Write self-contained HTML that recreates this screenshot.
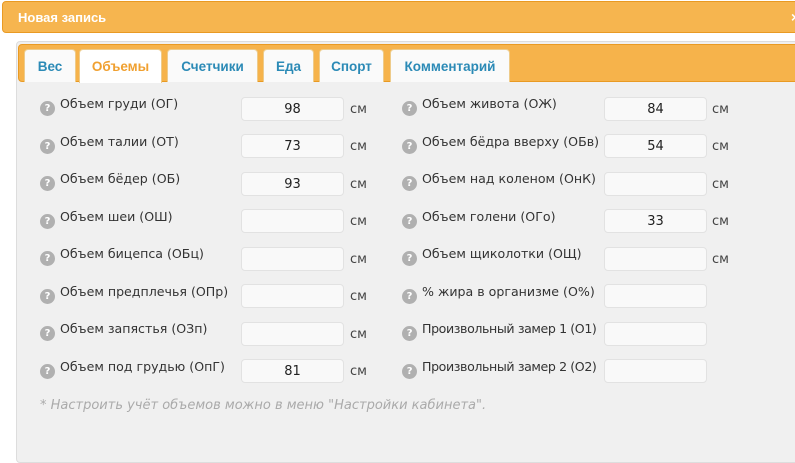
<!DOCTYPE html>
<html><head><meta charset="utf-8"><style>
body{margin:0;width:795px;height:431px;background:#fff;font-family:"Liberation Sans","DejaVu Sans",sans-serif;position:relative;overflow:hidden}
.hdr{position:absolute;left:2px;top:1px;width:800px;height:32px;background:#f6b54f;border:1px solid #e99a23;border-radius:4px;box-sizing:border-box}
.hdr span{position:absolute;left:15px;top:8px;color:#fff;font-weight:bold;font-size:13px}
.hdr b{position:absolute;left:788px;top:7px;color:#fff;font-size:14px}
.panel{position:absolute;left:16px;top:41px;width:790px;height:420px;background:#f0f0f0;border:1px solid #ddd;border-radius:4px}
.tabbar{position:absolute;left:18px;top:44px;width:790px;height:38px;background:#f6b34b;border:1px solid #e99a23;border-radius:4px;box-sizing:border-box}
.tab{position:absolute;top:49px;height:33px;background:#fafafa;border:1px solid #eecb8a;border-bottom:none;border-radius:4px 4px 0 0;box-sizing:border-box;text-align:center;font-weight:bold;font-size:13.5px;color:#2b8ab6;line-height:34px}
.tab.act{background:#fff;color:#f0a030;height:34px}
.lbl{position:absolute;font-family:"DejaVu Sans",sans-serif;font-size:12.6px;color:#333;white-space:nowrap}
.q{display:inline-block;width:15px;height:15px;border-radius:50%;background:#b0b0b0;color:#fff;font-size:10px;font-weight:bold;text-align:center;line-height:15px;margin-right:5px;vertical-align:-3px}
.inp{position:absolute;width:103px;height:24px;background:#f9f9f9;border:1px solid #e2e2e2;border-radius:4px;box-sizing:border-box;text-align:center;font-family:"DejaVu Sans",sans-serif;font-size:13px;color:#222;line-height:24px}
.cm{position:absolute;font-family:"DejaVu Sans",sans-serif;font-size:13px;color:#444}
.note{position:absolute;left:40px;top:398px;font-family:"DejaVu Sans",sans-serif;font-size:13px;font-style:italic;color:#aaa;white-space:nowrap}
</style></head><body>
<div class="hdr"><span>Новая запись</span><b>×</b></div>
<div class="panel"></div>
<div class="tabbar"></div>
<div class="tab" style="left:24px;width:52px">Вес</div>
<div class="tab act" style="left:79px;width:83px">Объемы</div>
<div class="tab" style="left:167px;width:91px">Счетчики</div>
<div class="tab" style="left:263px;width:51px">Еда</div>
<div class="tab" style="left:319px;width:65px">Спорт</div>
<div class="tab" style="left:390px;width:120px">Комментарий</div>

<div class="lbl" style="left:40px;top:96px"><span class="q">?</span>Объем груди (ОГ)</div>
<div class="inp" style="left:241px;top:97px">98</div><div class="cm" style="left:350px;top:102px">см</div>
<div class="lbl" style="left:40px;top:134px"><span class="q">?</span>Объем талии (ОТ)</div>
<div class="inp" style="left:241px;top:134px">73</div><div class="cm" style="left:350px;top:139px">см</div>
<div class="lbl" style="left:40px;top:171px"><span class="q">?</span>Объем бёдер (ОБ)</div>
<div class="inp" style="left:241px;top:172px">93</div><div class="cm" style="left:350px;top:177px">см</div>
<div class="lbl" style="left:40px;top:209px"><span class="q">?</span>Объем шеи (ОШ)</div>
<div class="inp" style="left:241px;top:209px"></div><div class="cm" style="left:350px;top:214px">см</div>
<div class="lbl" style="left:40px;top:246px"><span class="q">?</span>Объем бицепса (ОБц)</div>
<div class="inp" style="left:241px;top:247px"></div><div class="cm" style="left:350px;top:252px">см</div>
<div class="lbl" style="left:40px;top:284px"><span class="q">?</span>Объем предплечья (ОПр)</div>
<div class="inp" style="left:241px;top:284px"></div><div class="cm" style="left:350px;top:289px">см</div>
<div class="lbl" style="left:40px;top:321px"><span class="q">?</span>Объем запястья (ОЗп)</div>
<div class="inp" style="left:241px;top:322px"></div><div class="cm" style="left:350px;top:327px">см</div>
<div class="lbl" style="left:40px;top:359px"><span class="q">?</span>Объем под грудью (ОпГ)</div>
<div class="inp" style="left:241px;top:359px">81</div><div class="cm" style="left:350px;top:364px">см</div>

<div class="lbl" style="left:402px;top:96px"><span class="q">?</span>Объем живота (ОЖ)</div>
<div class="inp" style="left:604px;top:97px">84</div><div class="cm" style="left:712px;top:102px">см</div>
<div class="lbl" style="left:402px;top:134px"><span class="q">?</span>Объем бёдра вверху (ОБв)</div>
<div class="inp" style="left:604px;top:134px">54</div><div class="cm" style="left:712px;top:139px">см</div>
<div class="lbl" style="left:402px;top:171px"><span class="q">?</span>Объем над коленом (ОнК)</div>
<div class="inp" style="left:604px;top:172px"></div><div class="cm" style="left:712px;top:177px">см</div>
<div class="lbl" style="left:402px;top:209px"><span class="q">?</span>Объем голени (ОГо)</div>
<div class="inp" style="left:604px;top:209px">33</div><div class="cm" style="left:712px;top:214px">см</div>
<div class="lbl" style="left:402px;top:246px"><span class="q">?</span>Объем щиколотки (ОЩ)</div>
<div class="inp" style="left:604px;top:247px"></div><div class="cm" style="left:712px;top:252px">см</div>
<div class="lbl" style="left:402px;top:284px"><span class="q">?</span>% жира в организме (О%)</div>
<div class="inp" style="left:604px;top:284px"></div>
<div class="lbl" style="left:402px;top:321px;letter-spacing:-0.4px"><span class="q">?</span>Произвольный замер 1 (О1)</div>
<div class="inp" style="left:604px;top:322px"></div>
<div class="lbl" style="left:402px;top:359px;letter-spacing:-0.4px"><span class="q">?</span>Произвольный замер 2 (О2)</div>
<div class="inp" style="left:604px;top:359px"></div>

<div class="note">* Настроить учёт объемов можно в меню "Настройки кабинета".</div>
</body></html>
